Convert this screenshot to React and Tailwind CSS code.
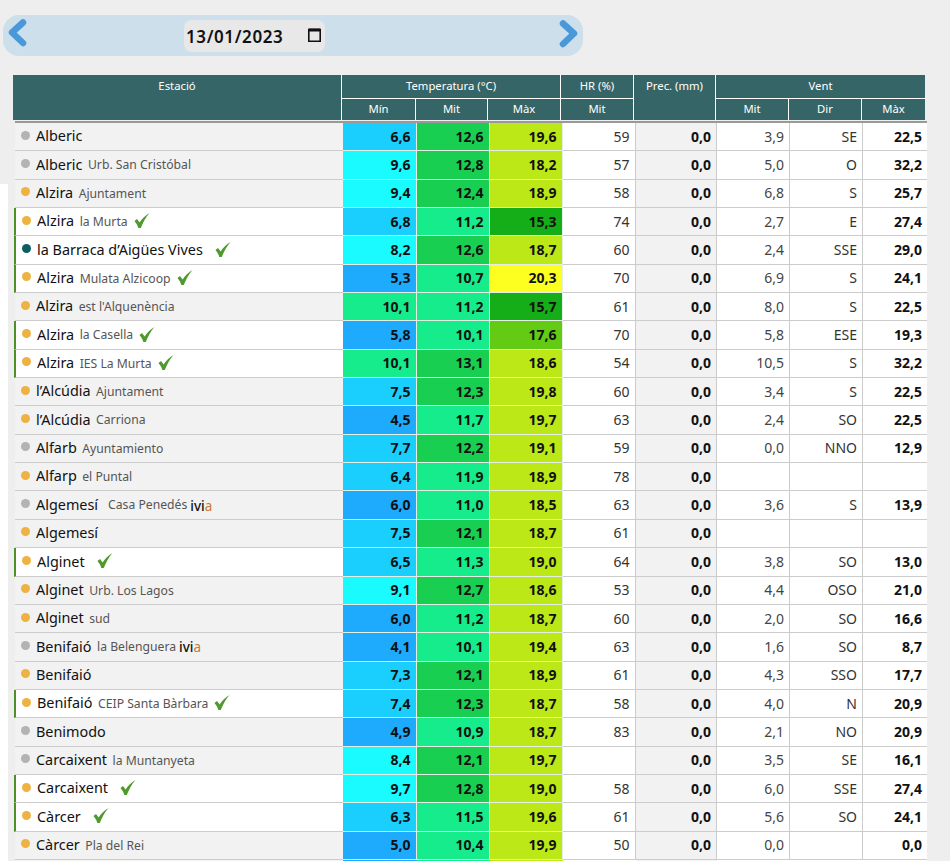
const GRID = "grid grid-cols-[328px_73.5px_73px_73px_73px_81.5px_73px_73px_64px]";

// t: min, mit, max; v: wind mit, dir, max
const rows = [
    { name: "Alberic", dot: "gray", t: ["6,6", "12,6", "19,6"], hr: "59", v: ["3,9", "SE", "22,5"] },
    { name: "Alberic", sub: "Urb. San Cristóbal", dot: "gray", t: ["9,6", "12,8", "18,2"], hr: "57", v: ["5,0", "O", "32,2"] },
    { name: "Alzira", sub: "Ajuntament", dot: "orange", t: ["9,4", "12,4", "18,9"], hr: "58", v: ["6,8", "S", "25,7"] },
    { name: "Alzira", sub: "la Murta", dot: "orange", check: true, t: ["6,8", "11,2", "15,3"], hr: "74", v: ["2,7", "E", "27,4"] },
    { name: "la Barraca d’Aigües Vives", dot: "teal", check: true, t: ["8,2", "12,6", "18,7"], hr: "60", v: ["2,4", "SSE", "29,0"] },
    { name: "Alzira", sub: "Mulata Alzicoop", dot: "orange", check: true, t: ["5,3", "10,7", "20,3"], hr: "70", v: ["6,9", "S", "24,1"] },
    { name: "Alzira", sub: "est l'Alquenència", dot: "orange", t: ["10,1", "11,2", "15,7"], hr: "61", v: ["8,0", "S", "22,5"] },
    { name: "Alzira", sub: "la Casella", dot: "orange", check: true, t: ["5,8", "10,1", "17,6"], hr: "70", v: ["5,8", "ESE", "19,3"] },
    { name: "Alzira", sub: "IES La Murta", dot: "orange", check: true, t: ["10,1", "13,1", "18,6"], hr: "54", v: ["10,5", "S", "32,2"] },
    { name: "l’Alcúdia", sub: "Ajuntament", dot: "orange", t: ["7,5", "12,3", "19,8"], hr: "60", v: ["3,4", "S", "22,5"] },
    { name: "l’Alcúdia", sub: "Carriona", dot: "orange", t: ["4,5", "11,7", "19,7"], hr: "63", v: ["2,4", "SO", "22,5"] },
    { name: "Alfarb", sub: "Ayuntamiento", dot: "gray", t: ["7,7", "12,2", "19,1"], hr: "59", v: ["0,0", "NNO", "12,9"] },
    { name: "Alfarp", sub: "el Puntal", dot: "orange", t: ["6,4", "11,9", "18,9"], hr: "78", v: ["", "", ""] },
    { name: "Algemesí", sub: "Casa Penedés", ivia: true, wide: true, dot: "gray", t: ["6,0", "11,0", "18,5"], hr: "63", v: ["3,6", "S", "13,9"] },
    { name: "Algemesí", dot: "orange", t: ["7,5", "12,1", "18,7"], hr: "61", v: ["", "", ""] },
    { name: "Alginet", dot: "orange", check: true, t: ["6,5", "11,3", "19,0"], hr: "64", v: ["3,8", "SO", "13,0"] },
    { name: "Alginet", sub: "Urb. Los Lagos", dot: "orange", t: ["9,1", "12,7", "18,6"], hr: "53", v: ["4,4", "OSO", "21,0"] },
    { name: "Alginet", sub: "sud", dot: "orange", t: ["6,0", "11,2", "18,7"], hr: "60", v: ["2,0", "SO", "16,6"] },
    { name: "Benifaió", sub: "la Belenguera", ivia: true, dot: "gray", t: ["4,1", "10,1", "19,4"], hr: "63", v: ["1,6", "SO", "8,7"] },
    { name: "Benifaió", dot: "orange", t: ["7,3", "12,1", "18,9"], hr: "61", v: ["4,3", "SSO", "17,7"] },
    { name: "Benifaió", sub: "CEIP Santa Bàrbara", dot: "orange", check: true, t: ["7,4", "12,3", "18,7"], hr: "58", v: ["4,0", "N", "20,9"] },
    { name: "Benimodo", dot: "gray", t: ["4,9", "10,9", "18,7"], hr: "83", v: ["2,1", "NO", "20,9"] },
    { name: "Carcaixent", sub: "la Muntanyeta", dot: "gray", t: ["8,4", "12,1", "19,7"], hr: "", v: ["3,5", "SE", "16,1"] },
    { name: "Carcaixent", dot: "orange", check: true, t: ["9,7", "12,8", "19,0"], hr: "58", v: ["6,0", "SSE", "27,4"] },
    { name: "Càrcer", dot: "orange", check: true, t: ["6,3", "11,5", "19,6"], hr: "61", v: ["5,6", "SO", "24,1"] },
    { name: "Càrcer", sub: "Pla del Rei", dot: "orange", t: ["5,0", "10,4", "19,9"], hr: "50", v: ["0,0", "", "0,0"] },
];

const dotColors = {
    gray: "bg-[#b3b3b3]",
    orange: "bg-[#eeb243]",
    teal: "bg-[#0b5f63]",
};

function tempColor(text) {
    const v = parseFloat(text.replace(",", "."));
    if (v < 6.1) return "bg-[#1eaafd]";
    if (v < 8) return "bg-[#1acffd]";
    if (v < 10) return "bg-[#19fbff]";
    if (v < 12) return "bg-[#16ec8b]";
    if (v < 14) return "bg-[#19cf52]";
    if (v < 16) return "bg-[#15ae18]";
    if (v < 18) return "bg-[#63cb14]";
    if (v < 20) return "bg-[#bde818]";
    return "bg-[#fdff20]";
}

function Check({ className }) {
    return (
        <svg width="16" height="17" viewBox="0 0 17 17" className={className}>
            <path d="M0.5 9 L3.2 7 L6 10.5 C8.5 6.5 12 3 16.5 0.5 C12.5 5 9.5 10.5 7.2 16.5 L4.6 16.5 C3.8 13.5 2.5 11.5 0.5 9 Z" fill="#4f9a2c" />
        </svg>
    );
}

function Station({ row }) {
    return (
        <div
            className={`flex items-center h-full border-b border-[#ccc] pl-[6px] ${
                row.check ? "bg-white -ml-[1px] border-l-[2px] border-l-[#4f8f2a]" : "bg-[#f2f2f2]"
            }`}
        >
            <span className={`w-[9px] h-[9px] rounded-full shrink-0 mr-[6px] -mt-[3px] ${dotColors[row.dot]}`} />
            <span className="text-[14.4px] text-[#111] whitespace-nowrap -mt-[1px]">{row.name}</span>
            {row.sub && (
                <span className={`text-[12.2px] text-[#555] whitespace-nowrap mt-[1px] ${row.wide ? "ml-[10px]" : "ml-[5.5px]"}`}>
                    {row.sub}
                </span>
            )}
            {row.ivia && (
                <span className="text-[13.5px] ml-[3px] mt-[1px] whitespace-nowrap font-medium text-[#111]">
                    ivi<span className="font-normal text-[#c8783a]">a</span>
                </span>
            )}
            {row.check && <Check className={`shrink-0 -mt-[2px] ${row.sub ? "ml-[6px]" : "ml-[12px]"}`} />}
        </div>
    );
}

function Cell({ children, className }) {
    return (
        <div className={`flex items-center justify-end pr-[5px] pb-[1px] h-full text-[14px] ${className}`}>
            {children}
        </div>
    );
}

function Row({ row }) {
    return (
        <div className={`${GRID} h-[28.35px]`}>
            <Station row={row} />
            {row.t.map((t, i) => (
                <Cell key={i} className={`font-bold text-[#111] border-b border-r border-[#e4efe4] ${tempColor(t)}`}>
                    {t}
                </Cell>
            ))}
            <Cell className="bg-white text-[#333] border-b border-r border-[#ccc]">{row.hr}</Cell>
            <Cell className="bg-[#f2f2f2] font-bold text-[#111] border-b border-r border-[#ccc]">0,0</Cell>
            <Cell className="bg-white text-[#444] border-b border-r border-[#ccc]">{row.v[0]}</Cell>
            <Cell className="bg-white text-[#333] border-b border-r border-[#ccc]">{row.v[1]}</Cell>
            <Cell className="bg-white font-bold text-[#111] border-b border-[#ccc]">{row.v[2]}</Cell>
        </div>
    );
}

function TableHeader() {
    const cell = "flex items-center justify-center bg-[#366567] text-white text-[11.3px]";
    return (
        <div className="grid grid-cols-[329px_74px_72px_73px_73px_82px_73px_73px_63px] grid-rows-[24px_21px] w-[912px]">
            <div className={`${cell} row-span-2 !items-start pt-[3px] border-r border-white`}>Estació</div>
            <div className={`${cell} col-span-3 pb-[1px] border-r border-b border-white`}>Temperatura (°C)</div>
            <div className={`${cell} pb-[1px] border-r border-b border-white`}>HR (%)</div>
            <div className={`${cell} row-span-2 !items-start pt-[3px] border-r border-white`}>Prec. (mm)</div>
            <div className={`${cell} col-span-3 pb-[1px] border-b border-white`}>Vent</div>
            <div className={`${cell} border-r border-white`}>Mín</div>
            <div className={`${cell} border-r border-white`}>Mit</div>
            <div className={`${cell} border-r border-white`}>Màx</div>
            <div className={`${cell} border-r border-white`}>Mit</div>
            <div className={`${cell} border-r border-white`}>Mit</div>
            <div className={`${cell} border-r border-white`}>Dir</div>
            <div className={cell}>Màx</div>
        </div>
    );
}

export default function App() {
    return (
        <div className="h-screen overflow-hidden bg-[#eeeeee] font-['Open_Sans',sans-serif]">
            {/* Date bar */}
            <div className="pt-[15px] pl-[3px]">
                <div className="flex items-center w-[580px] h-[41px] rounded-[16px] bg-[#cddfeb] pl-[5px] pr-[5px]">
                    <svg width="19" height="30" viewBox="0 0 19 30" className="shrink-0 -mt-[5px]">
                        <path d="M15 4.5 L4 14.5 L15 25" fill="none" stroke="#4a98d8" strokeWidth="6.5" strokeLinecap="round" strokeLinejoin="round" />
                    </svg>
                    <div className="flex items-center justify-between ml-[157px] w-[141px] h-[32px] mt-[1px] rounded-lg bg-[#e8e8e8] pl-[2px] pr-[4px]">
                        <span className="text-[17px] font-semibold text-[#111] tracking-[0.6px] mt-[1px]">13/01/2023</span>
                        <svg width="13" height="15" viewBox="0 0 13 15" className="-mt-[3px]">
                            <path d="M0.8 2.5 H12.2 V14.2 H0.8 Z" fill="none" stroke="#111" strokeWidth="1.6" />
                            <path d="M0.8 1.5 H12.2 V4.5 H0.8 Z" fill="#111" />
                        </svg>
                    </div>
                    <svg width="19" height="30" viewBox="0 0 19 30" className="shrink-0 ml-auto -mt-[4px]">
                        <path d="M4 4.5 L15 14.5 L4 25" fill="none" stroke="#4a98d8" strokeWidth="6.5" strokeLinecap="round" strokeLinejoin="round" />
                    </svg>
                </div>
            </div>

            <div className="flex mt-[19px]">
                <div className="w-2 shrink-0 mt-[109px] bg-white" />
                <div className="ml-[5px]">
                    <TableHeader />
                    <div className="ml-[2px] mt-[1px] border-t-2 border-[#999]">
                        {rows.map((row, i) => (
                            <Row key={i} row={row} />
                        ))}
                        {/* next row, only its top edge is on screen */}
                        <div className={`${GRID} h-[28.35px]`}>
                            <div className="bg-[#f2f2f2]" />
                            <div className="bg-[#1eaafd]" />
                            <div className="bg-[#16ec8b]" />
                            <div className="bg-[#bde818]" />
                            <div className="bg-white" />
                            <div className="bg-[#f2f2f2]" />
                            <div className="bg-white" />
                            <div className="bg-white" />
                            <div className="bg-white" />
                        </div>
                    </div>
                </div>
            </div>
        </div>
    );
}
